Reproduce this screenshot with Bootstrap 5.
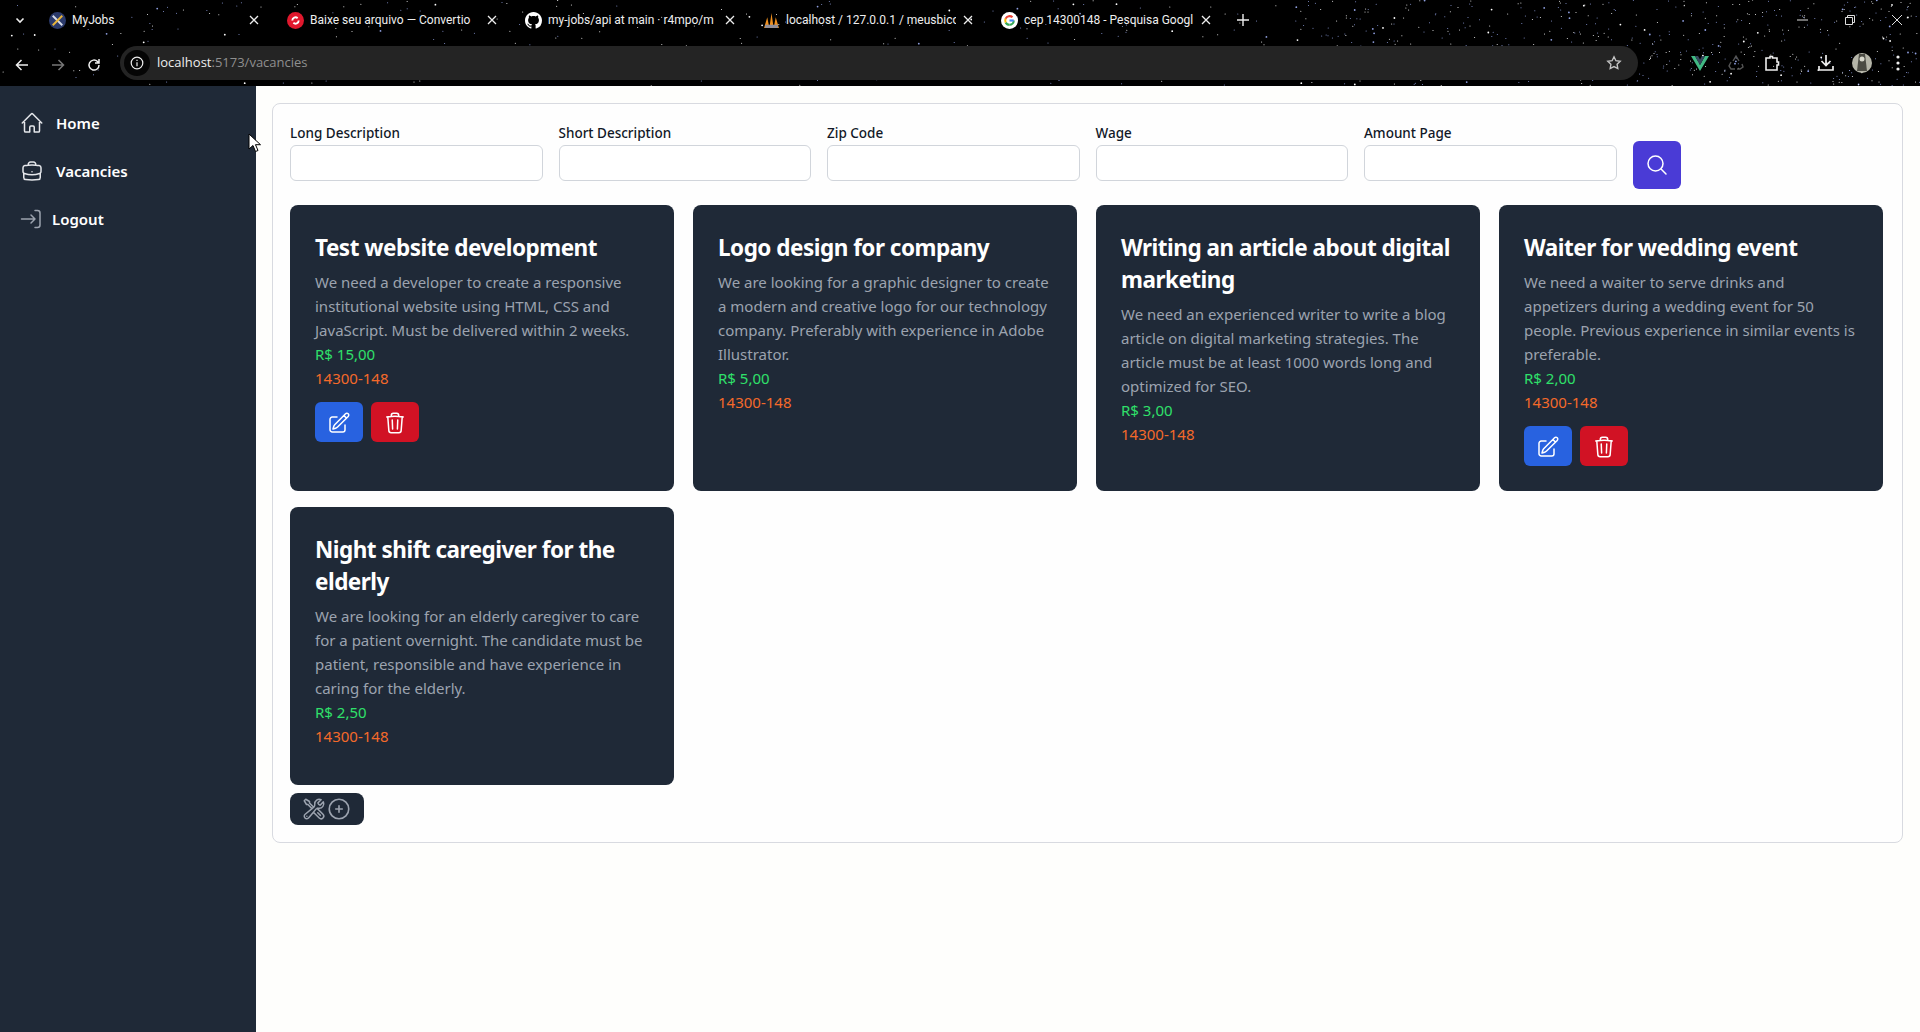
<!DOCTYPE html>
<html lang="en">
<head>
<meta charset="UTF-8">
<meta name="viewport" content="width=device-width, initial-scale=1">
<title>MyJobs</title>
<link href="https://cdn.jsdelivr.net/npm/bootstrap@5.3.0/dist/css/bootstrap.min.css" rel="stylesheet">
<style>
body { font-family: "Noto Sans", "Open Sans", sans-serif; background: #fefefc; overflow: hidden; height: 1032px; }
/* browser chrome */
.chrome-top { height: 86px; background: #000; position: relative; overflow: hidden; font-family: "Open Sans", sans-serif; }
#stars { position: absolute; left: 0; top: 0; width: 1920px; height: 86px; }
.tab-row { height: 46px; position: relative; padding-left: 46px; }
.tab-chevron { position: absolute; left: 14px; top: 14px; }
.tab-item { width: 238px; height: 40px; padding-left: 2px; color: #eee; font-family: Roboto, sans-serif; font-size: 12px; white-space: nowrap; }
.tab-icon { width: 17px; height: 17px; margin-left: 1px; margin-right: 6px; flex: none; }
.tab-title { width: 170px; overflow: hidden; }
.tab-close { margin-left: 7px; flex: none; }
.tab-plus { margin-left: 1px; margin-top: 14px; }
.win-controls { position: absolute; right: 0; top: 0; height: 40px; }
.addr-row { height: 34px; position: relative; padding-left: 14px; }
.addr-btn { width: 36px; flex: none; }
.addr-pill { width: 1518px; height: 34px; background: #242424; border-radius: 17px; margin-left: -2px; color: #8f8f8f; font-size: 13px; flex: none; }
.addr-info { width: 26px; height: 26px; border-radius: 50%; background: #050505; margin-left: 4px; margin-right: 7px; }
.addr-host { color: #eee; }
.addr-star { margin-left: auto; margin-right: 16px; }
.ext-row { margin-left: 53px; width: 220px; }
/* app */
.app-shell { height: 946px; }
.side-nav { width: 256px; flex: none; background: #1f2937; padding-top: 13px; }
.side-link { height: 48px; color: #fff; font-weight: 600; font-size: 15px; text-decoration: none; padding-left: 20px; gap: 12px; }
.side-link:hover { color: #fff; }
.side-link-out { gap: 8px; }
.content-area { padding: 17px 17px 0 16px; flex: 1; }
.filter-panel { border: 1px solid #d8dae0; border-radius: 8px; padding: 17px 19px 17px 17px; background: #fefefe; }
.filter-row { gap: 16px; height: 84px; padding-top: 2px; align-items: flex-start; }
.filter-field { width: 252.5px; }
.filter-field label { display: block; font-size: 13.5px; line-height: 20px; font-weight: 500; color: #111827; margin-bottom: 2px; }
.filter-field input { height: 36px; width: 100%; border: 1px solid #d1d5db; border-radius: 6px; background: #fff; display: block; }
.search-btn { width: 48px; height: 48px; background: #4a3bd6; border-radius: 6px; border: 0; padding: 0; margin-top: 18px; }
.vacancy-grid { display: grid; grid-template-columns: repeat(4, 384px); column-gap: 19px; row-gap: 16px; }
.vacancy-card { background: #1f2937; border-radius: 8px; padding: 25px; }
.vacancy-title { font-size: 22.5px; line-height: 32px; font-weight: 700; letter-spacing: -0.5px; color: #fff; padding-top: 2px; margin-bottom: 6px; }
.vacancy-text { font-size: 15px; line-height: 24px; color: #9ca3af; margin: 0; }
.vacancy-wage { font-size: 15px; line-height: 24px; color: #2fe06a; }
.vacancy-zip { font-size: 15px; line-height: 24px; color: #f4692a; }
.vacancy-actions { margin-top: 12px; gap: 8px; }
.act-btn { width: 48px; height: 40px; border: 0; padding: 0; border-radius: 6px; }
.act-edit { background: #2862e0; }
.act-del { background: #d11224; }
.add-btn { width: 74px; height: 32px; background: #1f2937; border: 0; border-radius: 8px; margin-top: 8px; padding: 0; }
.cursor-arrow { position: absolute; left: 248px; top: 133px; }
</style>
</head>
<body>

<div class="chrome-top">
    <svg id="stars" xmlns="http://www.w3.org/2000/svg"></svg>

    <div class="tab-row d-flex align-items-start">
        <svg class="tab-chevron" width="12" height="12" viewBox="0 0 12 12" fill="none" stroke="#eee" stroke-width="1.6"><path d="M2.5 4.5 6 8l3.5-3.500"/></svg>

        <div class="tab-item d-flex align-items-center">
            <svg class="tab-icon" viewBox="0 0 16 16"><circle cx="8" cy="8" r="8" fill="#2b3a6b"/><path d="M3.500 3.500l9 9" stroke="#d6dbe8" stroke-width="1.800"/><path d="M12.500 3.500l-9 9" stroke="#e8b53a" stroke-width="1.800"/></svg>
            <span class="tab-title">MyJobs</span>
            <svg class="tab-close" width="10" height="10" viewBox="0 0 10 10" stroke="#eee" stroke-width="1.3"><path d="M1 1l8 8M9 1 1 9"/></svg>
        </div>
        <div class="tab-item d-flex align-items-center">
            <svg class="tab-icon" viewBox="0 0 16 16"><circle cx="8" cy="8" r="8" fill="#e0182d"/><path d="M5 8a3 3 0 0 1 5-2.200M11 8a3 3 0 0 1-5 2.200" fill="none" stroke="#fff" stroke-width="1.800"/></svg>
            <span class="tab-title">Baixe seu arquivo — Convertio</span>
            <svg class="tab-close" width="10" height="10" viewBox="0 0 10 10" stroke="#eee" stroke-width="1.3"><path d="M1 1l8 8M9 1 1 9"/></svg>
        </div>
        <div class="tab-item d-flex align-items-center">
            <svg class="tab-icon" viewBox="0 0 16 16"><path fill="#fff" d="M8 0C3.58 0 0 3.58 0 8c0 3.54 2.29 6.53 5.47 7.59.4.07.55-.17.55-.38 0-.19-.01-.82-.01-1.49-2.01.37-2.53-.49-2.69-.94-.09-.23-.48-.94-.82-1.13-.28-.15-.68-.52-.01-.53.63-.01 1.08.58 1.23.82.72 1.21 1.87.87 2.33.66.07-.52.28-.87.51-1.07-1.78-.2-3.64-.89-3.64-3.95 0-.87.31-1.59.82-2.15-.08-.2-.36-1.02.08-2.12 0 0 .67-.21 2.2.82.64-.18 1.32-.27 2-.27s1.36.09 2 .27c1.53-1.04 2.2-.82 2.2-.82.44 1.1.16 1.92.08 2.12.51.56.82 1.27.82 2.15 0 3.07-1.87 3.75-3.65 3.95.29.25.54.73.54 1.48 0 1.07-.01 1.93-.01 2.2 0 .21.15.46.55.38A8.01 8.01 0 0 0 16 8c0-4.42-3.58-8-8-8z"/></svg>
            <span class="tab-title">my-jobs/api at main · r4mpo/m</span>
            <svg class="tab-close" width="10" height="10" viewBox="0 0 10 10" stroke="#eee" stroke-width="1.3"><path d="M1 1l8 8M9 1 1 9"/></svg>
        </div>
        <div class="tab-item d-flex align-items-center">
            <svg class="tab-icon" viewBox="0 0 16 16"><path fill="#f0901e" d="M1 15 4 5l2 10zM6 15 8 1l2 14zM10 15l2-10 3 10z"/><path fill="#8f8f9c" d="M2 15h12v-3H2z"/></svg>
            <span class="tab-title">localhost / 127.0.0.1 / meusbico</span>
            <svg class="tab-close" width="10" height="10" viewBox="0 0 10 10" stroke="#eee" stroke-width="1.3"><path d="M1 1l8 8M9 1 1 9"/></svg>
        </div>
        <div class="tab-item d-flex align-items-center">
            <svg class="tab-icon" viewBox="0 0 16 16"><circle cx="8" cy="8" r="8" fill="#fff"/><path d="M12 8a4 4 0 0 1-4 4" fill="none" stroke="#34a853" stroke-width="2"/><path d="M8 12a4 4 0 0 1-3.600-2.200" fill="none" stroke="#34a853" stroke-width="2"/><path d="M4.400 9.800a4 4 0 0 1 0-3.600" fill="none" stroke="#fbbc05" stroke-width="2"/><path d="M4.400 6.200A4 4 0 0 1 10.800 5" fill="none" stroke="#ea4335" stroke-width="2"/><path d="M8 8h4" stroke="#4285f4" stroke-width="2"/></svg>
            <span class="tab-title">cep 14300148 - Pesquisa Googl</span>
            <svg class="tab-close" width="10" height="10" viewBox="0 0 10 10" stroke="#eee" stroke-width="1.3"><path d="M1 1l8 8M9 1 1 9"/></svg>
        </div>
        <svg class="tab-plus" width="12" height="12" viewBox="0 0 12 12" stroke="#eee" stroke-width="1.4"><path d="M6 0v12M0 6h12"/></svg>

        <div class="win-controls d-flex align-items-center">
            <svg width="12" height="12" viewBox="0 0 12 12" stroke="#ddd" style="margin-right:35px"><path d="M0 6h11"/></svg>
            <svg width="12" height="12" viewBox="0 0 12 12" fill="none" stroke="#ddd" style="margin-right:35px"><path d="M1.500 3.500h7v7h-7zM3.500 3.500v-2h7v7h-2"/></svg>
            <svg width="12" height="12" viewBox="0 0 12 12" stroke="#ddd" style="margin-right:17px"><path d="M1 1l10 10M11 1 1 11"/></svg>
        </div>
    </div>

    <div class="addr-row d-flex align-items-center">
        <div class="addr-btn"><svg width="16" height="16" viewBox="0 0 16 16" fill="none" stroke="#eee" stroke-width="1.500"><path d="M14 8H2.500M7.500 3 2.500 8l5 5"/></svg></div>
        <div class="addr-btn"><svg width="16" height="16" viewBox="0 0 16 16" fill="none" stroke="#777" stroke-width="1.500"><path d="M2 8h11.500M8.500 3l5 5-5 5"/></svg></div>
        <div class="addr-btn"><svg width="16" height="16" viewBox="0 0 16 16" fill="none" stroke="#eee" stroke-width="1.500"><path d="M13 8a5 5 0 1 1-1.500-3.500L13 6M13 2v4H9"/></svg></div>
        <div class="addr-pill d-flex align-items-center">
            <div class="addr-info d-flex align-items-center justify-content-center">
                <svg width="14" height="14" viewBox="0 0 14 14" fill="none" stroke="#eee" stroke-width="1.200"><circle cx="7" cy="7" r="5.800"/><path d="M7 6.200v4M7 3.800v1.200"/></svg>
            </div>
            <span><span class="addr-host">localhost</span>:5173/vacancies</span>
            <svg class="addr-star" width="16" height="16" viewBox="0 0 16 16" fill="none" stroke="#c4c4c4" stroke-width="1.400"><path d="M8 1.800l1.900 3.900 4.300.6-3.100 3 .7 4.300L8 11.600l-3.800 2 .7-4.300-3.100-3 4.300-.6z"/></svg>
        </div>
        <div class="ext-row d-flex align-items-center">
            <svg width="18" height="16" viewBox="0 0 18 16" style="margin-right:18px"><path fill="#41b883" d="M0 1h4l5 9 5-9h4L9 16z"/><path fill="#35495e" d="M4 1h3l2 3.500L11 1h3L9 10z"/></svg>
            <svg width="18" height="18" viewBox="0 0 18 18" fill="none" stroke="#555" stroke-width="1.400" style="margin-right:18px"><path d="M6 7l3-5 3 5M15 10l1 3-3 2h-3M8 15H4l-2-3 2-4"/></svg>
            <svg width="18" height="18" viewBox="0 0 18 18" fill="none" stroke="#eee" stroke-width="1.600" style="margin-right:36px"><path d="M3 4h4V2.500h2.500V4H14v4h1.500v3H14v5H3z"/></svg>
            <svg width="18" height="18" viewBox="0 0 18 18" fill="none" stroke="#eee" stroke-width="1.700" style="margin-right:17px"><path d="M9 1v10M4.500 7 9 11.500 13.500 7M2 12v4h14v-4"/></svg>
            <svg width="20" height="20" viewBox="0 0 20 20" style="margin-right:24px"><circle cx="10" cy="10" r="10" fill="#b5b5a8"/><path d="M7 1h6l2 17H5z" fill="#4c4c44"/><circle cx="10" cy="6" r="2.500" fill="#d8d8cc"/></svg>
            <svg width="4" height="16" viewBox="0 0 4 16" fill="#eee"><circle cx="2" cy="2" r="1.600"/><circle cx="2" cy="8" r="1.600"/><circle cx="2" cy="14" r="1.600"/></svg>
        </div>
    </div>
</div>

<div class="app-shell d-flex">
    <nav class="side-nav d-flex flex-column">
        <a class="side-link d-flex align-items-center" href="#">
            <svg width="24" height="24" viewBox="0 0 24 24" fill="none" stroke="#e5e7eb" stroke-width="1.500" stroke-linecap="round" stroke-linejoin="round"><path d="m2.250 12 8.954-8.955a1.126 1.126 0 0 1 1.591 0L21.750 12M4.500 9.750v10.125c0 .621.504 1.125 1.125 1.125H9.750v-4.875c0-.621.504-1.125 1.125-1.125h2.250c.621 0 1.125.504 1.125 1.125V21h4.125c.621 0 1.125-.504 1.125-1.125V9.750"/></svg>
            Home
        </a>
        <a class="side-link d-flex align-items-center" href="#">
            <svg width="24" height="24" viewBox="0 0 24 24" fill="none" stroke="#e5e7eb" stroke-width="1.500" stroke-linecap="round" stroke-linejoin="round"><path d="M20.250 14.150v4.250c0 1.094-.787 2.036-1.872 2.180-2.087.277-4.216.420-6.378.420s-4.291-.143-6.378-.420c-1.085-.144-1.872-1.086-1.872-2.180v-4.250m16.500 0a2.180 2.180 0 0 0 .750-1.661V8.706c0-1.081-.768-2.015-1.837-2.175a48.114 48.114 0 0 0-3.413-.387m4.500 8.006c-.194.165-.420.295-.673.380A23.978 23.978 0 0 1 12 15.750c-2.648 0-5.195-.429-7.577-1.220a2.016 2.016 0 0 1-.673-.380m0 0A2.180 2.180 0 0 1 3 12.489V8.706c0-1.081.768-2.015 1.837-2.175a48.111 48.111 0 0 1 3.413-.387m7.500 0V5.250A2.250 2.250 0 0 0 13.500 3h-3a2.250 2.250 0 0 0-2.250 2.250v.894m7.500 0a48.667 48.667 0 0 0-7.500 0M12 12.750h.008v.008H12v-.008z"/></svg>
            Vacancies
        </a>
        <a class="side-link side-link-out d-flex align-items-center" href="#">
            <svg width="24" height="24" viewBox="0 0 24 24" fill="none" stroke="#9ca3af" stroke-width="1.500" stroke-linecap="round" stroke-linejoin="round"><path d="M15 3.500h2.500A2.500 2.500 0 0 1 20 6v12a2.500 2.500 0 0 1-2.500 2.500H15"/><path d="M1.500 12H15m-4-4 4 4-4 4"/></svg>
            Logout
        </a>
    </nav>

    <main class="content-area">
        <div class="filter-panel">
            <div class="filter-row d-flex">
                <div class="filter-field"><label>Long Description</label><input type="text"></div>
                <div class="filter-field"><label>Short Description</label><input type="text"></div>
                <div class="filter-field"><label>Zip Code</label><input type="text"></div>
                <div class="filter-field"><label>Wage</label><input type="text"></div>
                <div class="filter-field"><label>Amount Page</label><input type="text"></div>
                <button class="search-btn d-flex align-items-center justify-content-center" type="button">
                    <svg width="24" height="24" viewBox="0 0 24 24" fill="none" stroke="#fff" stroke-width="1.500" stroke-linecap="round" stroke-linejoin="round"><path d="m21 21-5.197-5.197m0 0A7.500 7.500 0 1 0 5.196 5.196a7.500 7.500 0 0 0 10.607 10.607z"/></svg>
                </button>
            </div>

            <div class="vacancy-grid" id="vacancyGrid"></div>

            <button class="add-btn d-flex align-items-center justify-content-center" type="button">
                <svg width="24" height="24" viewBox="0 0 24 24" fill="none" stroke="#9ca3af" stroke-width="1.500" stroke-linecap="round" stroke-linejoin="round"><path d="M11.420 15.170 17.250 21A2.652 2.652 0 0 0 21 17.250l-5.877-5.877M11.420 15.170l2.496-3.030c.317-.384.740-.626 1.208-.766M11.420 15.170l-4.655 5.653a2.548 2.548 0 1 1-3.586-3.586l6.837-5.630m5.108-.233c.550-.164 1.163-.188 1.743-.140a4.500 4.500 0 0 0 4.486-6.336l-3.276 3.277a3.004 3.004 0 0 1-2.250-2.250l3.276-3.276a4.500 4.500 0 0 0-6.336 4.486c.091 1.076-.071 2.264-.904 2.950l-.102.085m-1.745 1.437L5.909 7.500H4.500L2.250 3.750l1.500-1.500L7.500 4.500v1.409l4.260 4.260m-1.745 1.437 1.745-1.437m6.615 8.206L15.750 15.750M4.867 19.125h.008v.008h-.008v-.008z"/></svg>
                <svg width="26" height="26" viewBox="0 0 24 24" fill="none" stroke="#9ca3af" stroke-width="1.500" stroke-linecap="round" stroke-linejoin="round"><path d="M12 9v6m3-3H9m12 0a9 9 0 1 1-18 0 9 9 0 0 1 18 0z"/></svg>
            </button>
        </div>
    </main>
</div>

<svg class="cursor-arrow" width="14" height="20" viewBox="0 0 14 20"><path d="M1 1v15l4-3.500 2.500 6 2.500-1-2.500-5.800H12.500z" fill="#fff" stroke="#000"/></svg>

<script>
    const vagas = [
        { titulo: 'Test website development', texto: 'We need a developer to create a responsive institutional website using HTML, CSS and JavaScript. Must be delivered within 2 weeks.', valor: 'R$ 15,00', acoes: true },
        { titulo: 'Logo design for company', texto: 'We are looking for a graphic designer to create a modern and creative logo for our technology company. Preferably with experience in Adobe Illustrator.', valor: 'R$ 5,00', acoes: false },
        { titulo: 'Writing an article about digital marketing', texto: 'We need an experienced writer to write a blog article on digital marketing strategies. The article must be at least 1000 words long and optimized for SEO.', valor: 'R$ 3,00', acoes: false },
        { titulo: 'Waiter for wedding event', texto: 'We need a waiter to serve drinks and appetizers during a wedding event for 50 people. Previous experience in similar events is preferable.', valor: 'R$ 2,00', acoes: true },
        { titulo: 'Night shift caregiver for the elderly', texto: 'We are looking for an elderly caregiver to care for a patient overnight. The candidate must be patient, responsible and have experience in caring for the elderly.', valor: 'R$ 2,50', acoes: false }
    ];

    const iconoEditar = `<svg width="24" height="24" viewBox="0 0 24 24" fill="none" stroke="#fff" stroke-width="1.500" stroke-linecap="round" stroke-linejoin="round"><path d="m16.862 4.487 1.687-1.688a1.875 1.875 0 1 1 2.652 2.652L10.582 16.070a4.500 4.500 0 0 1-1.897 1.130L6 18l.800-2.685a4.500 4.500 0 0 1 1.130-1.897l8.932-8.931zm0 0L19.500 7.125M18 14v4.750A2.250 2.250 0 0 1 15.750 21H5.250A2.250 2.250 0 0 1 3 18.750V8.250A2.250 2.250 0 0 1 5.250 6H10"/></svg>`;
    const iconoBorrar = `<svg width="24" height="24" viewBox="0 0 24 24" fill="none" stroke="#fff" stroke-width="1.500" stroke-linecap="round" stroke-linejoin="round"><path d="m14.740 9-.346 9m-4.788 0L9.260 9m9.968-3.210c.342.052.682.107 1.022.166m-1.022-.165L18.160 19.673a2.250 2.250 0 0 1-2.244 2.077H8.084a2.250 2.250 0 0 1-2.244-2.077L4.772 5.790m14.456 0a48.108 48.108 0 0 0-3.478-.397m-12 .562c.340-.059.680-.114 1.022-.165m0 0a48.110 48.110 0 0 1 3.478-.397m7.500 0v-.916c0-1.180-.910-2.164-2.090-2.201a51.964 51.964 0 0 0-3.320 0c-1.180.037-2.090 1.022-2.090 2.201v.916m7.500 0a48.667 48.667 0 0 0-7.500 0"/></svg>`;

    document.getElementById('vacancyGrid').innerHTML = vagas.map(v => `
        <div class="vacancy-card">
            <h5 class="vacancy-title">${v.titulo}</h5>
            <p class="vacancy-text">${v.texto}</p>
            <div class="vacancy-wage">${v.valor}</div>
            <div class="vacancy-zip">14300-148</div>
            <div class="vacancy-actions d-flex">
                ${v.acoes ? `<button class="act-btn act-edit" type="button">${iconoEditar}</button><button class="act-btn act-del" type="button">${iconoBorrar}</button>` : ''}
            </div>
        </div>`).join('');

    // fondo de estrellas del tema del navegador
    let semilla = 7;
    const azar = () => (semilla = (semilla * 16807) % 2147483647) / 2147483647;
    let estrellas = '';
    for (let i = 0; i < 900; i++) {
        const x = azar() < 0.5 ? azar() * 1920 : 1300 + azar() * 620;
        const y = azar() * 86;
        const r = azar() < 0.1 ? 0.9 : 0.5;
        const color = azar() < 0.5 ? '#fff' : '#8f9fe0';
        estrellas += `<circle cx="${x.toFixed(1)}" cy="${y.toFixed(1)}" r="${r}" fill="${color}"/>`;
    }
    document.getElementById('stars').innerHTML = estrellas;
</script>
<script src="https://cdn.jsdelivr.net/npm/bootstrap@5.3.0/dist/js/bootstrap.bundle.min.js"></script>
</body>
</html>
